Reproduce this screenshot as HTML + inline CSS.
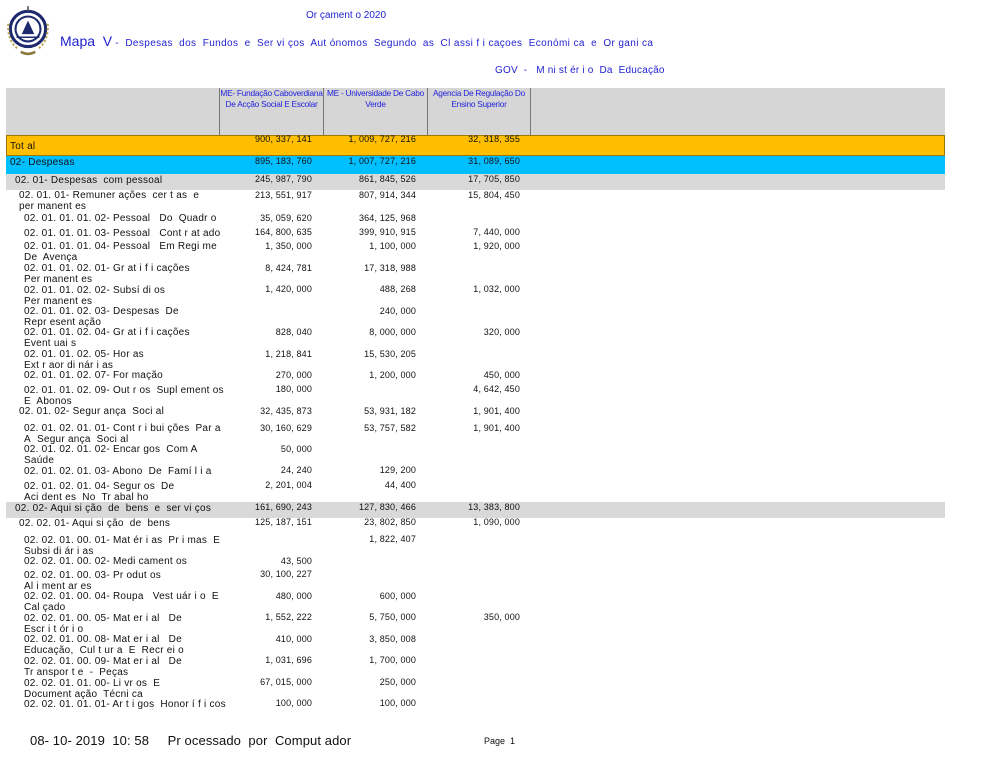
<!DOCTYPE html>
<html><head><meta charset="utf-8">
<style>
*{margin:0;padding:0;box-sizing:border-box}
body{width:1000px;height:773px;background:#fff;position:relative;overflow:hidden;font-family:"Liberation Sans",Arial,sans-serif;color:#111}
.a{position:absolute;white-space:nowrap}
.l{position:absolute;font-size:10px;letter-spacing:0.25px;line-height:11px;white-space:nowrap;color:#111}
.n{position:absolute;font-size:9px;letter-spacing:0.15px;line-height:11px;text-align:right;width:100px;white-space:nowrap;color:#111}
.blue{color:#1f1fd0}
.hd{position:absolute;top:88px;height:47px;font-size:8.3px;line-height:11px;color:#2222dd;text-align:center;letter-spacing:-0.25px;border-left:1px solid #777}
</style></head><body>

<svg class="a" style="left:3px;top:3px" width="50" height="54" viewBox="0 0 48 52">
<circle cx="24" cy="25" r="17" fill="#fff" stroke="#1d2a6e" stroke-width="3"/>
<circle cx="24" cy="25" r="12" fill="#fff" stroke="#1d2a6e" stroke-width="2"/>
<polygon points="24,17 18,30 30,30" fill="#1d2a6e"/>
<line x1="13" y1="33" x2="35" y2="33" stroke="#1d2a6e" stroke-width="1.5"/>
<path d="M5 20 Q4 36 14 44" stroke="#b9a24a" stroke-width="2" fill="none" stroke-dasharray="2 2"/>
<path d="M43 20 Q44 36 34 44" stroke="#b9a24a" stroke-width="2" fill="none" stroke-dasharray="2 2"/>
<path d="M17 47 Q24 51 31 47" stroke="#8a7a3a" stroke-width="2.5" fill="none"/>
<line x1="24" y1="3" x2="24" y2="8" stroke="#555" stroke-width="1.5"/>
</svg>

<div class="a blue" style="left:306px;top:10px;font-size:10px">Or çament o 2020</div>
<div class="a blue" style="left:60px;top:33px;font-size:14px">Mapa&nbsp; V<span style="font-size:10px;letter-spacing:0.38px"> -&nbsp; Despesas&nbsp; dos&nbsp; Fundos&nbsp; e&nbsp; Ser vi ços&nbsp; Aut ónomos&nbsp; Segundo&nbsp; as&nbsp; Cl assi f i caçoes&nbsp; Económi ca&nbsp; e&nbsp; Or gani ca</span></div>
<div class="a blue" style="left:495px;top:65px;font-size:10px;letter-spacing:0.2px">GOV&nbsp; -&nbsp;&nbsp; M ni st ér i o&nbsp; Da&nbsp; Educação</div>

<div class="a" style="left:6px;top:88px;width:939px;height:47px;background:#d6d6d6"></div>
<div class="hd" style="left:219px;width:104px">ME- Fundação Caboverdiana<br>De Acção Social E Escolar</div>
<div class="hd" style="left:323px;width:104px">ME - Universidade De Cabo<br>Verde</div>
<div class="hd" style="left:427px;width:103px">Agencia De Regulação Do<br>Ensino Superior</div>
<div class="a" style="left:530px;top:88px;height:47px;border-left:1px solid #777"></div>

<div class="a" style="left:6px;top:135px;width:939px;height:21px;background:#ffbf00;border:1px solid #a07a00"></div>
<div class="a" style="left:6px;top:156px;width:939px;height:18px;background:#00bfff"></div>
<div class="a" style="left:6px;top:174px;width:939px;height:16px;background:#d9d9d9"></div>
<div class="a" style="left:6px;top:502px;width:939px;height:16px;background:#d9d9d9"></div>

<div class="l" style="left:10px;top:141px">Tot al</div>
<div class="n" style="left:212px;top:134px">900, 337, 141</div><div class="n" style="left:316px;top:134px">1, 009, 727, 216</div><div class="n" style="left:420px;top:134px">32, 318, 355</div>

<div class="l" style="left:10px;top:157px">02- Despesas</div>
<div class="n" style="left:212px;top:156px">895, 183, 760</div><div class="n" style="left:316px;top:156px">1, 007, 727, 216</div><div class="n" style="left:420px;top:156px">31, 089, 650</div>

<div class="l" style="left:15px;top:175px">02. 01- Despesas&nbsp; com pessoal</div>
<div class="n" style="left:212px;top:174px">245, 987, 790</div><div class="n" style="left:316px;top:174px">861, 845, 526</div><div class="n" style="left:420px;top:174px">17, 705, 850</div>

<div class="l" style="left:19px;top:190px">02. 01. 01- Remuner ações&nbsp; cer t as&nbsp; e<br>per manent es</div>
<div class="n" style="left:212px;top:190px">213, 551, 917</div><div class="n" style="left:316px;top:190px">807, 914, 344</div><div class="n" style="left:420px;top:190px">15, 804, 450</div>

<div class="l" style="left:24px;top:213px">02. 01. 01. 01. 02- Pessoal&nbsp;&nbsp; Do&nbsp; Quadr o</div>
<div class="n" style="left:212px;top:213px">35, 059, 620</div><div class="n" style="left:316px;top:213px">364, 125, 968</div>

<div class="l" style="left:24px;top:228px">02. 01. 01. 01. 03- Pessoal&nbsp;&nbsp; Cont r at ado</div>
<div class="n" style="left:212px;top:227px">164, 800, 635</div><div class="n" style="left:316px;top:227px">399, 910, 915</div><div class="n" style="left:420px;top:227px">7, 440, 000</div>

<div class="l" style="left:24px;top:241px">02. 01. 01. 01. 04- Pessoal&nbsp;&nbsp; Em Regi me<br>De&nbsp; Avença</div>
<div class="n" style="left:212px;top:241px">1, 350, 000</div><div class="n" style="left:316px;top:241px">1, 100, 000</div><div class="n" style="left:420px;top:241px">1, 920, 000</div>

<div class="l" style="left:24px;top:263px">02. 01. 01. 02. 01- Gr at i f i cações<br>Per manent es</div>
<div class="n" style="left:212px;top:263px">8, 424, 781</div><div class="n" style="left:316px;top:263px">17, 318, 988</div>

<div class="l" style="left:24px;top:285px">02. 01. 01. 02. 02- Subsí di os<br>Per manent es</div>
<div class="n" style="left:212px;top:284px">1, 420, 000</div><div class="n" style="left:316px;top:284px">488, 268</div><div class="n" style="left:420px;top:284px">1, 032, 000</div>

<div class="l" style="left:24px;top:306px">02. 01. 01. 02. 03- Despesas&nbsp; De<br>Repr esent ação</div>
<div class="n" style="left:316px;top:306px">240, 000</div>

<div class="l" style="left:24px;top:327px">02. 01. 01. 02. 04- Gr at i f i cações<br>Event uai s</div>
<div class="n" style="left:212px;top:327px">828, 040</div><div class="n" style="left:316px;top:327px">8, 000, 000</div><div class="n" style="left:420px;top:327px">320, 000</div>

<div class="l" style="left:24px;top:349px">02. 01. 01. 02. 05- Hor as<br>Ext r aor di nár i as</div>
<div class="n" style="left:212px;top:349px">1, 218, 841</div><div class="n" style="left:316px;top:349px">15, 530, 205</div>

<div class="l" style="left:24px;top:370px">02. 01. 01. 02. 07- For mação</div>
<div class="n" style="left:212px;top:370px">270, 000</div><div class="n" style="left:316px;top:370px">1, 200, 000</div><div class="n" style="left:420px;top:370px">450, 000</div>

<div class="l" style="left:24px;top:385px">02. 01. 01. 02. 09- Out r os&nbsp; Supl ement os<br>E&nbsp; Abonos</div>
<div class="n" style="left:212px;top:384px">180, 000</div><div class="n" style="left:420px;top:384px">4, 642, 450</div>

<div class="l" style="left:19px;top:406px">02. 01. 02- Segur ança&nbsp; Soci al</div>
<div class="n" style="left:212px;top:406px">32, 435, 873</div><div class="n" style="left:316px;top:406px">53, 931, 182</div><div class="n" style="left:420px;top:406px">1, 901, 400</div>

<div class="l" style="left:24px;top:423px">02. 01. 02. 01. 01- Cont r i bui ções&nbsp; Par a<br>A&nbsp; Segur ança&nbsp; Soci al</div>
<div class="n" style="left:212px;top:423px">30, 160, 629</div><div class="n" style="left:316px;top:423px">53, 757, 582</div><div class="n" style="left:420px;top:423px">1, 901, 400</div>

<div class="l" style="left:24px;top:444px">02. 01. 02. 01. 02- Encar gos&nbsp; Com A<br>Saúde</div>
<div class="n" style="left:212px;top:444px">50, 000</div>

<div class="l" style="left:24px;top:466px">02. 01. 02. 01. 03- Abono&nbsp; De&nbsp; Famí l i a</div>
<div class="n" style="left:212px;top:465px">24, 240</div><div class="n" style="left:316px;top:465px">129, 200</div>

<div class="l" style="left:24px;top:481px">02. 01. 02. 01. 04- Segur os&nbsp; De<br>Aci dent es&nbsp; No&nbsp; Tr abal ho</div>
<div class="n" style="left:212px;top:480px">2, 201, 004</div><div class="n" style="left:316px;top:480px">44, 400</div>

<div class="l" style="left:15px;top:503px">02. 02- Aqui si ção&nbsp; de&nbsp; bens&nbsp; e&nbsp; ser vi ços</div>
<div class="n" style="left:212px;top:502px">161, 690, 243</div><div class="n" style="left:316px;top:502px">127, 830, 466</div><div class="n" style="left:420px;top:502px">13, 383, 800</div>

<div class="l" style="left:19px;top:518px">02. 02. 01- Aqui si ção&nbsp; de&nbsp; bens</div>
<div class="n" style="left:212px;top:517px">125, 187, 151</div><div class="n" style="left:316px;top:517px">23, 802, 850</div><div class="n" style="left:420px;top:517px">1, 090, 000</div>

<div class="l" style="left:24px;top:535px">02. 02. 01. 00. 01- Mat ér i as&nbsp; Pr i mas&nbsp; E<br>Subsi di ár i as</div>
<div class="n" style="left:316px;top:534px">1, 822, 407</div>

<div class="l" style="left:24px;top:556px">02. 02. 01. 00. 02- Medi cament os</div>
<div class="n" style="left:212px;top:556px">43, 500</div>

<div class="l" style="left:24px;top:570px">02. 02. 01. 00. 03- Pr odut os<br>Al i ment ar es</div>
<div class="n" style="left:212px;top:569px">30, 100, 227</div>

<div class="l" style="left:24px;top:591px">02. 02. 01. 00. 04- Roupa&nbsp;&nbsp; Vest uár i o&nbsp; E<br>Cal çado</div>
<div class="n" style="left:212px;top:591px">480, 000</div><div class="n" style="left:316px;top:591px">600, 000</div>

<div class="l" style="left:24px;top:613px">02. 02. 01. 00. 05- Mat er i al&nbsp;&nbsp; De<br>Escr i t ór i o</div>
<div class="n" style="left:212px;top:612px">1, 552, 222</div><div class="n" style="left:316px;top:612px">5, 750, 000</div><div class="n" style="left:420px;top:612px">350, 000</div>

<div class="l" style="left:24px;top:634px">02. 02. 01. 00. 08- Mat er i al&nbsp;&nbsp; De<br>Educação,&nbsp; Cul t ur a&nbsp; E&nbsp; Recr ei o</div>
<div class="n" style="left:212px;top:634px">410, 000</div><div class="n" style="left:316px;top:634px">3, 850, 008</div>

<div class="l" style="left:24px;top:656px">02. 02. 01. 00. 09- Mat er i al&nbsp;&nbsp; De<br>Tr anspor t e&nbsp; -&nbsp; Peças</div>
<div class="n" style="left:212px;top:655px">1, 031, 696</div><div class="n" style="left:316px;top:655px">1, 700, 000</div>

<div class="l" style="left:24px;top:678px">02. 02. 01. 01. 00- Li vr os&nbsp; E<br>Document ação&nbsp; Técni ca</div>
<div class="n" style="left:212px;top:677px">67, 015, 000</div><div class="n" style="left:316px;top:677px">250, 000</div>

<div class="l" style="left:24px;top:699px">02. 02. 01. 01. 01- Ar t i gos&nbsp; Honor í f i cos</div>
<div class="n" style="left:212px;top:698px">100, 000</div><div class="n" style="left:316px;top:698px">100, 000</div>

<div class="a" style="left:30px;top:733px;font-size:13px;letter-spacing:0.1px">08- 10- 2019&nbsp; 10: 58&nbsp;&nbsp;&nbsp;&nbsp; Pr ocessado&nbsp; por&nbsp; Comput ador</div>
<div class="a" style="left:484px;top:736px;font-size:9px">Page&nbsp; 1</div>
</body></html>
